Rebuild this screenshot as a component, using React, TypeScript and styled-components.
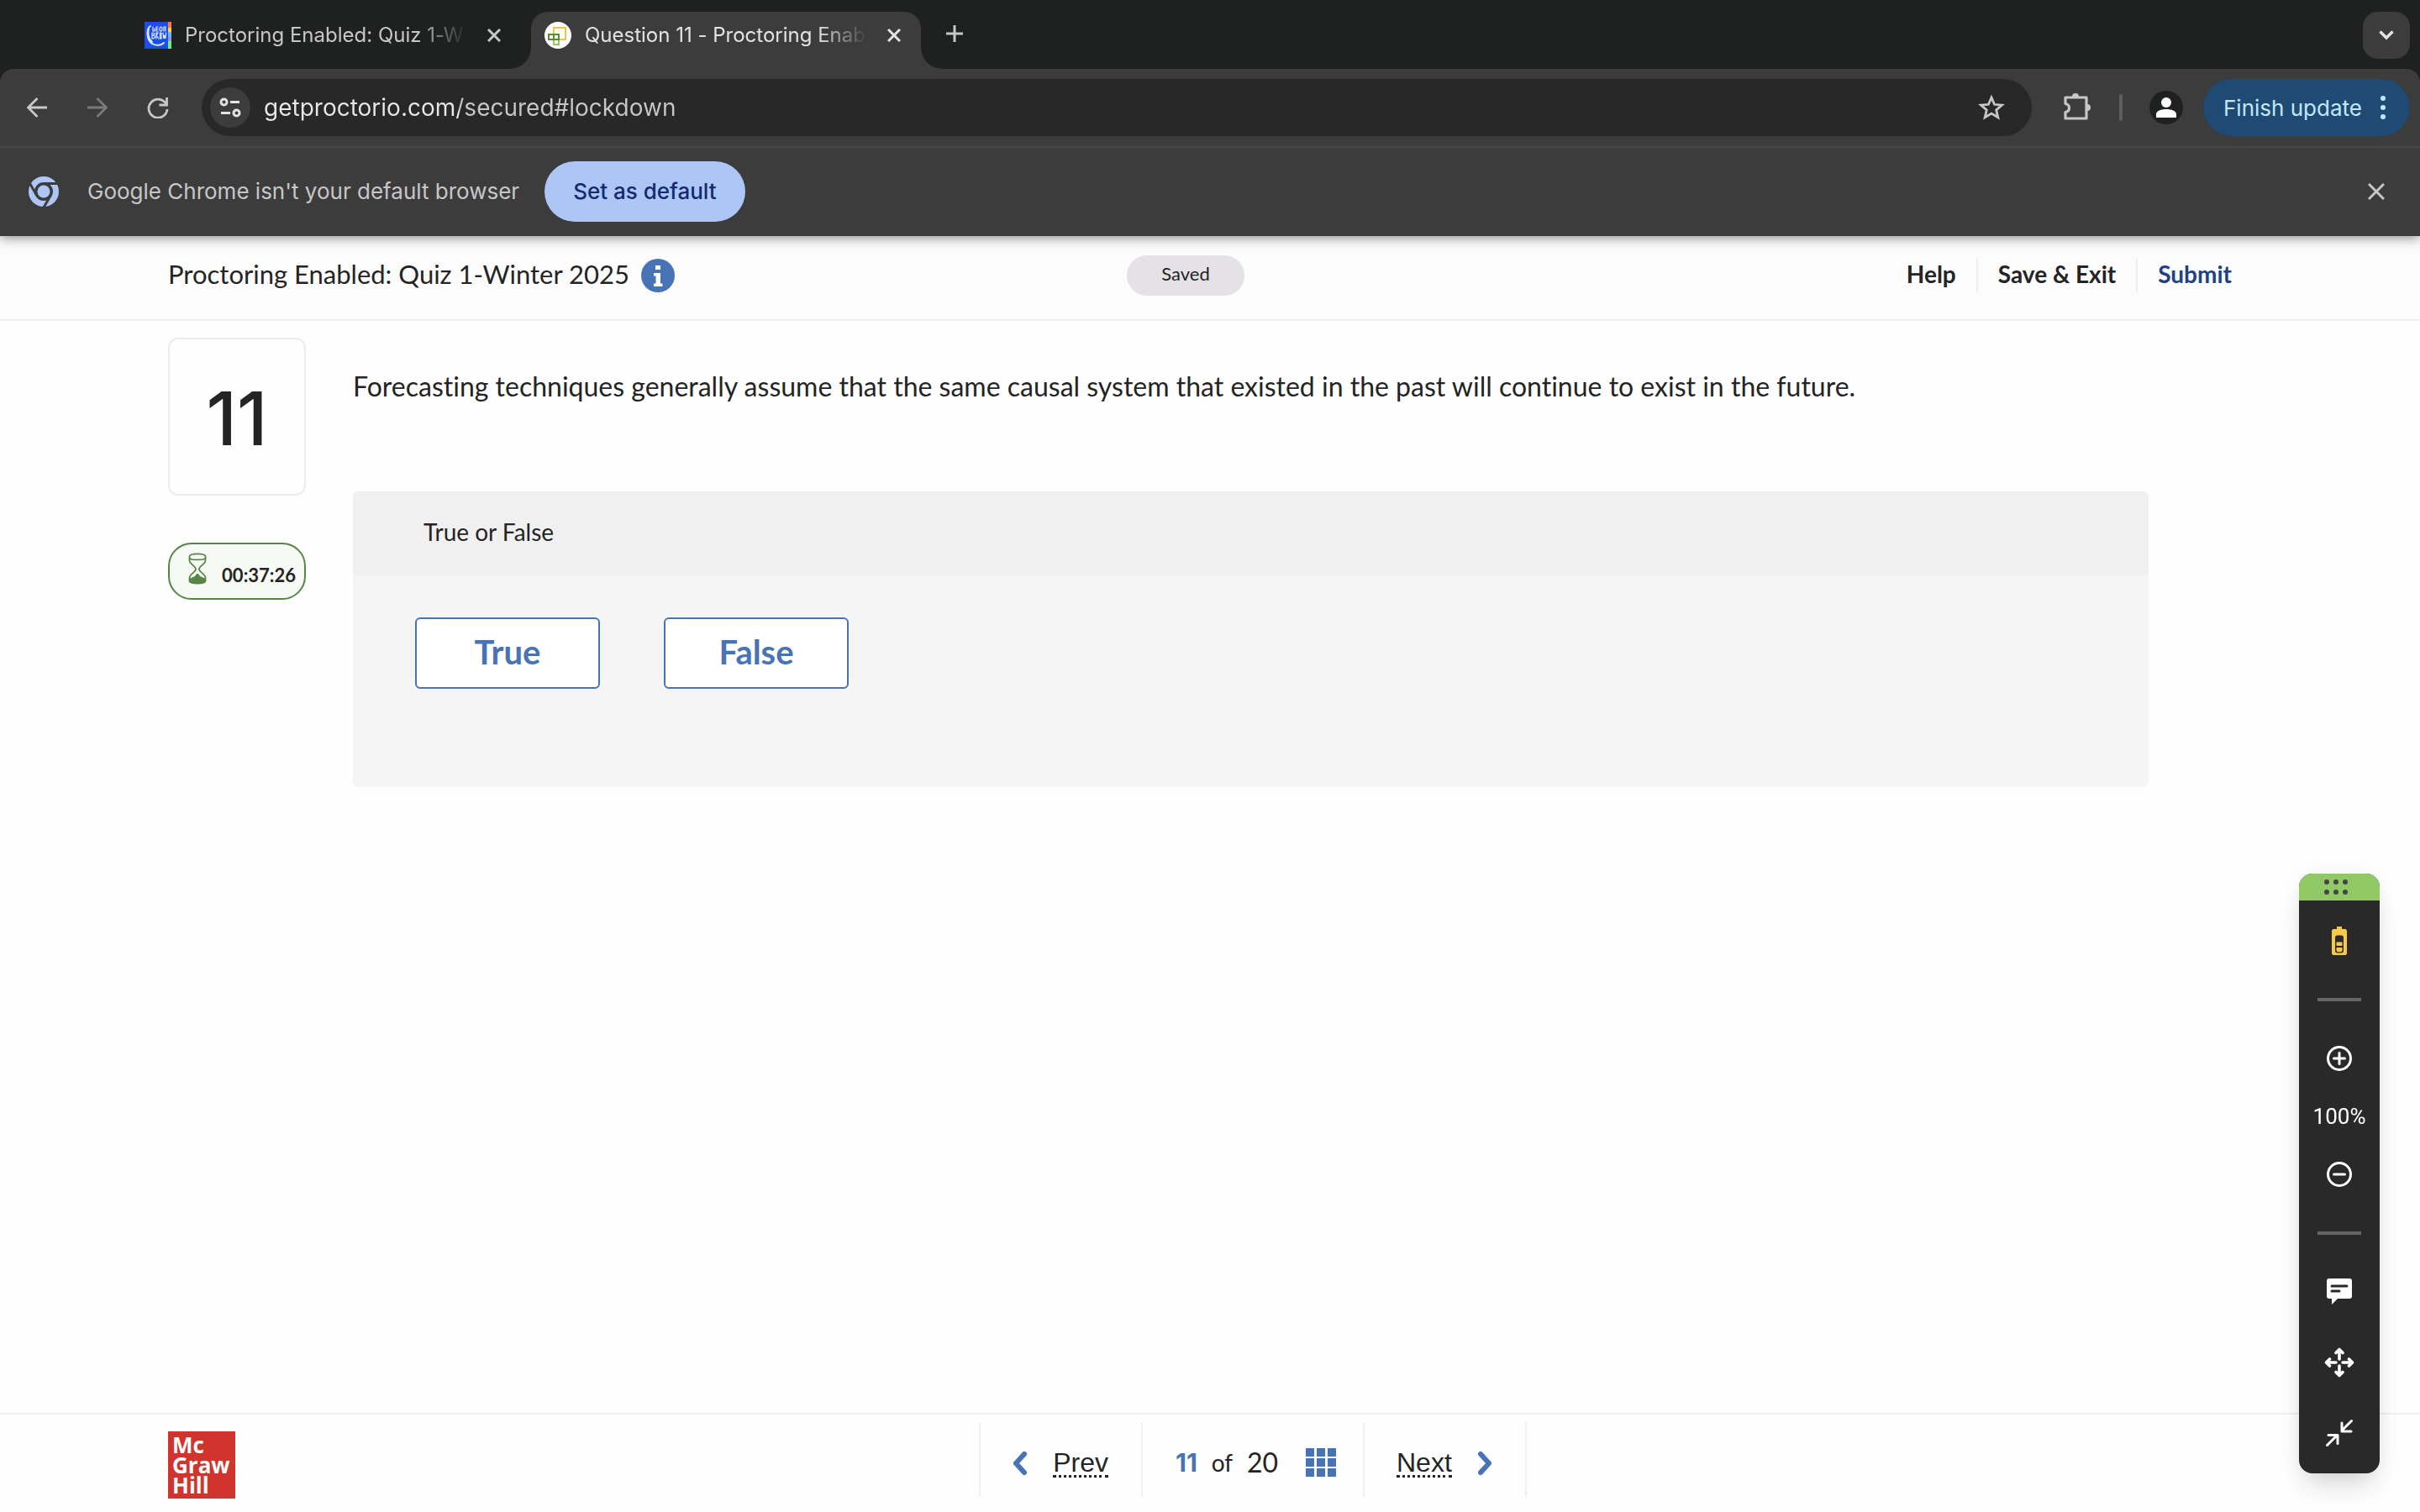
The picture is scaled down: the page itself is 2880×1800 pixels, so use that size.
import React from "react";
import styled, { createGlobalStyle } from "styled-components";

const GlobalStyle = createGlobalStyle`
  *, *::before, *::after { box-sizing: border-box; }
  body {
    margin: 0;
    background: #fefefe;
    color: #242424;
    font-family: Lato, "Open Sans", sans-serif;
    font-variant-ligatures: none;
  }
  button { font: inherit; color: inherit; padding: 0; border: 0; background: none; cursor: pointer; }
  a { color: inherit; text-decoration: none; }
  h1, h2, p { margin: 0; font-weight: 400; }
  svg { display: block; flex: none; }
`;

const Screen = styled.div`
  min-height: 100vh;
  display: flex;
  flex-direction: column;
`;

/* Browser frame */

const Browser = styled.header`
  position: relative;
  z-index: 1;
  background: #1f2120;
  color: #c7c7c7;
  font-family: Inter, "Liberation Sans", sans-serif;
  box-shadow: 0 1px 14px rgba(40, 32, 40, 0.6);
`;

const TabStrip = styled.div`
  display: flex;
  align-items: flex-end;
  height: 82px;
  padding: 0 12px 0 156px;
`;

const Tab = styled.div<{ $active?: boolean }>`
  position: relative;
  display: flex;
  align-items: center;
  width: 464px;
  height: 68px;
  margin-right: 12px;
  padding: 0 12px 12px 16px;
  border-radius: 20px 20px 0 0;
  background: ${(p) => (p.$active ? "#3c3c3c" : "transparent")};
  color: ${(p) => (p.$active ? "#e3e3e3" : "#c7c7c7")};

  &::before,
  &::after {
    content: "";
    display: ${(p) => (p.$active ? "block" : "none")};
    position: absolute;
    bottom: 0;
    width: 24px;
    height: 24px;
  }
  &::before { right: 100%; background: radial-gradient(circle at 0 0, transparent 23px, #3c3c3c 24px); }
  &::after { left: 100%; background: radial-gradient(circle at 100% 0, transparent 23px, #3c3c3c 24px); }
`;

const TabTitle = styled.span`
  flex: 1;
  min-width: 0;
  margin: 0 12px 0 16px;
  overflow: hidden;
  white-space: nowrap;
  font-size: 24px;
  line-height: 32px;
  mask-image: linear-gradient(90deg, #000 calc(100% - 60px), transparent);
`;

const IconButton = styled.button<{ $size?: number }>`
  display: grid;
  place-items: center;
  flex: none;
  width: ${(p) => p.$size ?? 48}px;
  height: ${(p) => p.$size ?? 48}px;
`;

const NewTab = styled(IconButton)`
  margin: 0 auto 22px 8px;
`;

const TabSearch = styled(IconButton)`
  margin-bottom: 12px;
  border-radius: 18px;
  background: #3c3c3c;
  color: #e3e3e3;
`;

const Toolbar = styled.div`
  display: flex;
  align-items: center;
  height: 94px;
  padding: 0 12px 0 20px;
  border-bottom: 2px solid #484848;
  border-radius: 16px 16px 0 0;
  background: #3c3c3c;
`;

const History = styled.nav`
  display: flex;
  gap: 24px;
  margin-right: 28px;
`;

const Omnibox = styled.div`
  display: flex;
  align-items: center;
  flex: 1;
  height: 68px;
  padding: 0 24px 0 10px;
  border-radius: 34px;
  background: #282828;
`;

const SiteInfo = styled(IconButton)`
  border-radius: 50%;
  background: #3c3c3c;
  color: #e3e3e3;
`;

const Address = styled.input`
  flex: 1;
  min-width: 0;
  margin: 0 16px;
  padding: 0;
  border: 0;
  outline: 0;
  font: 400 28px/40px Inter, "Liberation Sans", sans-serif;
  color: transparent;
  background: linear-gradient(90deg, #e8e8e8 232px, #c7c7c7 232px);
  background-clip: text;
`;

const Extensions = styled(IconButton)`
  margin: 0 26px 0 30px;
`;

const ToolbarDivider = styled.span`
  width: 4px;
  height: 32px;
  border-radius: 2px;
  background: #5e5e5e;
`;

const Profile = styled(IconButton)`
  margin: 0 24px 0 32px;
  border-radius: 50%;
  background: #1f2120;
`;

const UpdateButton = styled.button`
  display: flex;
  align-items: center;
  justify-content: space-between;
  width: 246px;
  height: 68px;
  padding: 0 28px 0 24px;
  border-radius: 34px;
  background: #1f4a73;
  color: #c2e7ff;
  font-size: 26px;
  font-weight: 400;
`;

const InfoBar = styled.div`
  display: flex;
  align-items: center;
  height: 105px;
  padding: 0 28px 2px 34px;
  background: #3c3c3c;
  font-size: 26px;
`;

const InfoText = styled.p`
  margin: 0 30px 0 34px;
`;

const DefaultButton = styled.button`
  height: 72px;
  padding: 0 34px;
  margin-right: auto;
  border-radius: 36px;
  background: #aec6f6;
  color: #102c6e;
  font-weight: 500;
`;

/* Quiz page */

const PageHeader = styled.div`
  display: grid;
  grid-template-columns: 1141fr auto 1199fr;
  align-items: center;
  height: 101px;
  padding: 0 200px 6px;
  border-bottom: 2px solid #eeeeee;
  background: #fcfcfc;
`;

const TitleGroup = styled.div`
  display: flex;
  align-items: center;
  gap: 14px;
`;

const PageTitle = styled.h1`
  padding-bottom: 4px;
  font-size: 31px;
  line-height: 36px;
  white-space: nowrap;
`;

const SavedPill = styled.span`
  width: 140px;
  padding-bottom: 4px;
  border-radius: 24px;
  background: #e4e2e5;
  font-size: 22px;
  line-height: 44px;
  text-align: center;
`;

const HeaderNav = styled.nav`
  display: flex;
  justify-content: flex-end;
`;

const HeaderAction = styled.button<{ $primary?: boolean }>`
  padding: 0 24px 4px;
  font-size: 28px;
  font-weight: 700;
  line-height: 36px;
  color: ${(p) => (p.$primary ? "#1f4382" : "#242424")};

  & + & { border-left: 2px solid #eeeeee; }
`;

const Main = styled.main`
  flex: 1;
  display: grid;
  grid-template-columns: 164px 1fr;
  column-gap: 56px;
  align-items: start;
  padding: 20px 323px 0 200px;
`;

const Aside = styled.div`
  display: flex;
  flex-direction: column;
  gap: 56px;
`;

const QuestionNumber = styled.h2`
  display: grid;
  place-items: center;
  height: 188px;
  padding-top: 4px;
  border: 2px solid #ececec;
  border-radius: 12px;
  font-family: Inter, sans-serif;
  font-size: 88px;
  font-weight: 500;
`;

const Timer = styled.div`
  display: flex;
  align-items: center;
  justify-content: space-between;
  height: 68px;
  padding: 0 10px 6px 22px;
  border: 2px solid #578546;
  border-radius: 28px;
  background: #f7f9f5;
  color: #578546;
`;

const TimeLeft = styled.span`
  padding-top: 14px;
  color: #242424;
  font-size: 22px;
  font-weight: 700;
`;

const QuestionText = styled.p`
  padding-top: 38px;
  font-size: 32px;
  line-height: 40px;
`;

const AnswerPanel = styled.section`
  margin-top: 105px;
  border-radius: 6px;
  background: #f5f5f5;
  overflow: hidden;
`;

const AnswerTitle = styled.h2`
  padding: 0 84px 4px;
  background: #f0f0f0;
  font-size: 28px;
  line-height: 96px;
`;

const Answers = styled.div`
  display: flex;
  gap: 76px;
  padding: 50px 74px 117px;
`;

const AnswerButton = styled.button`
  width: 220px;
  height: 85px;
  padding-bottom: 4px;
  border: 2px solid #4874b5;
  border-radius: 6px;
  background: #ffffff;
  color: #4874b5;
  font-size: 40px;
  font-weight: 700;
`;

const Footer = styled.footer`
  display: grid;
  grid-template-columns: 965fr auto 863fr;
  padding: 10px 200px 16px;
  border-top: 2px solid #f0f0f0;
`;

const Logo = styled.div`
  width: 80px;
  height: 80px;
  margin-top: 10px;
  padding: 4px 5px;
  background: #d0342c;
  color: #ffffff;
  font: 700 26px/24px "Open Sans", sans-serif;
  white-space: pre-line;
`;

const Pager = styled.nav`
  display: flex;
  height: 88px;
  border-right: 2px solid #f0f0f0;
`;

const PagerCell = styled.div`
  display: flex;
  align-items: center;
  justify-content: space-between;
  width: 193px;
  padding: 8px 39px 0 38px;
  border-left: 2px solid #f0f0f0;
`;

const Position = styled(PagerCell)`
  width: 264px;
  padding: 6px 32px 0 39px;
`;

const PageLink = styled.a`
  border-bottom: 3px dotted #242424;
  font: 400 32px/30px "Liberation Sans", Arial, sans-serif;
`;

const CurrentPage = styled.strong`
  color: #4874b5;
  font: 700 30px/40px Inter, sans-serif;
`;

const PageCount = styled.span`
  font-size: 32px;
  line-height: 40px;
`;

const PageOf = styled.span`
  font-size: 28px;
  line-height: 40px;
`;

const QuestionGridButton = styled.button`
  margin-left: 16px;
`;

const GridBlue = styled.div`
  display: grid;
  grid-template-columns: repeat(3, 10px);
  gap: 2px 3px;
`;

const GridCell = styled.span`
  height: 10px;
  background: #4874b5;
`;

/* Floating proctor controls */

const Dock = styled.aside`
  position: fixed;
  right: 48px;
  bottom: 46px;
  z-index: 2;
  width: 96px;
  padding-bottom: 6px;
  border-radius: 16px;
  background: #292929;
  color: #ffffff;
  box-shadow: 0 20px 32px -8px rgba(0, 0, 0, 0.16), 0 0 24px rgba(0, 0, 0, 0.05);
`;

const DockHandle = styled.button`
  display: grid;
  place-items: center;
  width: 100%;
  height: 32px;
  margin-bottom: 6px;
  padding: 0 8px 0 0;
  border-radius: 16px 16px 0 0;
  background: #90c965;
`;

const DockButton = styled.button`
  display: grid;
  place-items: center;
  width: 100%;
  height: 84px;
`;

const DockRule = styled.hr`
  width: 52px;
  height: 4px;
  margin: 26px auto;
  border: 0;
  background: #666666;
`;

const ZoomLevel = styled.div`
  font-family: Roboto, sans-serif;
  font-size: 26px;
  line-height: 54px;
  text-align: center;
`;

type StrokeProps = {
  w: number;
  h?: number;
  sw: number;
  d: string;
  color?: string;
  cap?: "round" | "butt";
};

const Stroke = ({ w, h = w, sw, d, color = "currentColor", cap = "round" }: StrokeProps) => (
  <svg width={w} height={h} viewBox={`0 0 ${w} ${h}`} fill="none" stroke={color} strokeWidth={sw} strokeLinecap={cap} strokeLinejoin={cap === "round" ? "round" : "miter"} aria-hidden="true">
    <path d={d} />
  </svg>
);

const CloseIcon = ({ size = 16 }: { size?: number }) => (
  <Stroke w={size} sw={3} cap="butt" d={`M1 1L${size - 1} ${size - 1}M${size - 1} 1L1 ${size - 1}`} />
);

const CollegeFavicon = () => (
  <svg width="32" height="32" viewBox="0 0 32 32" aria-hidden="true">
    <rect width="32" height="32" fill="#1d4fe8" />
    <g fill="none" stroke="#dbe6ff" strokeLinecap="round">
      <path strokeWidth="2" d="M7 5C2 8 2 21 9 26c5 3 11 2 14-1M5 8c-2 6 0 13 4 16" />
      <path strokeWidth="1.2" d="M10 6v5h2v-3M14 6h2M14 8.500h2M14 11h2M14 6v5M19.500 6c-2 1-2 5 0 5s2-5 0-5M23 11V6h2v5" />
      <path strokeWidth="1.2" d="M9 13v7M9 13c4 0 4 3 0 3 5 0 4 4 0 4M14 20v-7h2l-2 3 3 4M18.500 13v7h1.500v-7zM22 13l.8 7 1-4 1 4 .8-7" />
    </g>
    <rect x="28" width="4" height="8" fill="#ff7a3c" />
    <rect x="28" y="7" width="4" height="5" fill="#ffd34d" />
    <rect x="28" y="12" width="4" height="6" fill="#6fb7ff" />
    <rect x="28" y="18" width="4" height="6" fill="#9d8cff" />
    <rect x="28" y="23" width="4" height="9" fill="#6df26a" />
  </svg>
);

const ProctorFavicon = () => (
  <svg width="32" height="32" viewBox="0 0 32 32" fill="none" strokeWidth="2" aria-hidden="true">
    <circle cx="16" cy="16" r="16" fill="#fff" />
    <path stroke="#f5c342" d="M11 14V7h14v14h-7" />
    <path stroke="#8cc665" d="M11 21v6h6v-6" />
    <path stroke="#5b8c35" d="M5 15h12v6H5zM11 15v6" />
  </svg>
);

const ChromeIcon = () => (
  <svg width="36" height="36" viewBox="0 0 36 36" aria-hidden="true">
    <circle cx="18" cy="18" r="18" fill="#aec6f6" />
    <circle cx="18" cy="18" r="11" fill="#3c3c3c" />
    {[0, 120, 240].map((angle) => (
      <path key={angle} d="M18 8.500h19" stroke="#3c3c3c" strokeWidth="3" transform={`rotate(${angle} 18 18)`} />
    ))}
    <circle cx="18" cy="18" r="7.500" fill="#aec6f6" />
  </svg>
);

const PuzzleIcon = () => (
  <svg width="34" height="34" viewBox="0 2 34 34" aria-hidden="true">
    <path fill="none" stroke="currentColor" strokeWidth="3.2" strokeLinejoin="round" d="M3 7h25v25H3v-7.500c6-1 6-9 0-10z" />
    <path fill="currentColor" d="M11 6a4 4 0 0 1 8 0zM29 15a4 4 0 0 1 0 8z" />
  </svg>
);

const InfoIcon = () => (
  <svg width="40" height="40" viewBox="0 0 40 40" aria-hidden="true">
    <circle cx="20" cy="20" r="20" fill="#4874b5" />
    <path fill="#fff" d="M17 8h6v5h-6zM15 17h8v12.500h2.500V33h-10.500v-3.500h2.500v-9H15z" />
  </svg>
);

const HourglassIcon = () => (
  <svg width="22" height="38" viewBox="0 0 22 38" aria-hidden="true">
    <g fill="none" stroke="currentColor" strokeWidth="1.8">
      <path d="M1.500 4.500C1.500 0.300 20.500 0.300 20.500 4.500V9c0 5-7.500 6.500-7.500 10.500S20.500 25 20.500 30v3.500c0 4.200-19 4.200-19 0V30c0-5 7.500-6.500 7.500-10.500S1.500 14 1.500 9z" />
      <path d="M1.500 6.500c2 2.500 17 2.500 19 0" />
    </g>
    <path fill="currentColor" d="M1.500 31c3-2 7-2 8.500-6h2c1.500 4 5.500 4 8.500 6v3c0 4-19 4-19 0z" />
  </svg>
);

const BatteryIcon = () => (
  <svg width="18" height="34" viewBox="0 0 18 34" aria-hidden="true">
    <path fill="#f7c948" d="M6 0h6v3h4.500L18 4.500V32.500L16.500 34h-15L0 32.500V4.500L1.500 3H6z" />
    <rect x="4" y="10.500" width="10" height="21" rx="3" fill="#292929" />
    <path fill="#f7c948" d="M5.500 18.500h7v4.500h-7zM5.500 25h7v4l-1.500 1.300h-4L5.500 29z" />
  </svg>
);

const CommentIcon = () => (
  <svg width="30" height="32" viewBox="0 0 30 32" aria-hidden="true">
    <path fill="currentColor" d="M3 0h24a3 3 0 0 1 3 3v18a3 3 0 0 1-3 3H13l-7 7v-7H3a3 3 0 0 1-3-3V3a3 3 0 0 1 3-3z" />
    <path stroke="#292929" strokeWidth="3" strokeLinecap="round" d="M6 9h18M6 15h9" />
  </svg>
);

const circle = "M15 1.500a13.500 13.500 0 1 0 0 27a13.500 13.500 0 1 0 0-27z";

export default function App() {
  return (
    <Screen>
      <GlobalStyle />
      <Browser>
        <TabStrip>
          <Tab>
            <CollegeFavicon />
            <TabTitle>Proctoring Enabled: Quiz 1-W</TabTitle>
            <IconButton $size={40} aria-label="Close tab"><CloseIcon /></IconButton>
          </Tab>
          <Tab $active>
            <ProctorFavicon />
            <TabTitle>Question 11 - Proctoring Enab</TabTitle>
            <IconButton $size={40} aria-label="Close tab"><CloseIcon /></IconButton>
          </Tab>
          <NewTab $size={40} aria-label="New tab"><Stroke w={20} sw={3} cap="butt" d="M10 0v20M0 10h20" /></NewTab>
          <TabSearch $size={56} aria-label="Search tabs"><Stroke w={18} h={12} sw={3.4} cap="butt" d="M1.500 1.500L9 9l7.500-7.500" /></TabSearch>
        </TabStrip>
        <Toolbar>
          <History aria-label="History">
            <IconButton aria-label="Back"><Stroke w={26} sw={2.8} cap="butt" d="M25 13H3M13.500 2L2.500 13l11 11" /></IconButton>
            <IconButton aria-label="Forward"><Stroke w={26} sw={2.8} cap="butt" color="#7a7a7a" d="M1 13h22M12.500 2l11 11-11 11" /></IconButton>
            <IconButton aria-label="Reload"><Stroke w={26} sw={2.8} cap="butt" d="M23 9.500A11 11 0 1 0 24 15M23.500 1v9H14.500" /></IconButton>
          </History>
          <Omnibox>
            <SiteInfo aria-label="View site information"><Stroke w={26} sw={3} cap="butt" d="M9 6.500a3.500 3.500 0 1 0-7 0a3.500 3.500 0 1 0 7 0M13 6.500h11M24 19.500a3.500 3.500 0 1 0-7 0a3.500 3.500 0 1 0 7 0M2 19.500h11" /></SiteInfo>
            <Address aria-label="Address" defaultValue="getproctorio.com/secured#lockdown" />
            <IconButton aria-label="Bookmark this tab"><Stroke w={32} sw={2.8} cap="butt" d="M16 4l3.500 8.300 9 .800-6.800 5.900 2.100 8.800L16 23.100l-7.800 4.700 2.100-8.800L3.500 13.100l9-.800z" /></IconButton>
          </Omnibox>
          <Extensions aria-label="Extensions"><PuzzleIcon /></Extensions>
          <ToolbarDivider />
          <Profile $size={40} aria-label="Profile">
            <svg width="24" height="24" viewBox="0 0 24 24" fill="#fff" aria-hidden="true"><circle cx="12" cy="6" r="6" /><path d="M0 24v-4c0-8 24-8 24 0v4z" /></svg>
          </Profile>
          <UpdateButton>
            Finish update
            <svg width="8" height="28" viewBox="0 0 8 28" fill="currentColor" aria-hidden="true"><circle cx="4" cy="3" r="3" /><circle cx="4" cy="14" r="3" /><circle cx="4" cy="25" r="3" /></svg>
          </UpdateButton>
        </Toolbar>
        <InfoBar>
          <ChromeIcon />
          <InfoText>Google Chrome isn't your default browser</InfoText>
          <DefaultButton>Set as default</DefaultButton>
          <IconButton aria-label="Dismiss"><CloseIcon size={20} /></IconButton>
        </InfoBar>
      </Browser>

      <PageHeader>
        <TitleGroup>
          <PageTitle>Proctoring Enabled: Quiz 1-Winter 2025</PageTitle>
          <button aria-label="Assignment information"><InfoIcon /></button>
        </TitleGroup>
        <SavedPill>Saved</SavedPill>
        <HeaderNav>
          <HeaderAction>Help</HeaderAction>
          <HeaderAction>Save &amp; Exit</HeaderAction>
          <HeaderAction $primary>Submit</HeaderAction>
        </HeaderNav>
      </PageHeader>

      <Main>
        <Aside>
          <QuestionNumber>11</QuestionNumber>
          <Timer>
            <HourglassIcon />
            <TimeLeft>00:37:26</TimeLeft>
          </Timer>
        </Aside>
        <div>
          <QuestionText>Forecasting techniques generally assume that the same causal system that existed in the past will continue to exist in the future.</QuestionText>
          <AnswerPanel>
            <AnswerTitle>True or False</AnswerTitle>
            <Answers>
              <AnswerButton>True</AnswerButton>
              <AnswerButton>False</AnswerButton>
            </Answers>
          </AnswerPanel>
        </div>
      </Main>

      <Footer>
        <Logo>{"Mc\nGraw\nHill"}</Logo>
        <Pager aria-label="Questions">
          <PagerCell>
            <Stroke w={18} h={30} sw={6} color="#4874b5" d="M14 4L4 15l10 11" />
            <PageLink href="#prev">Prev</PageLink>
          </PagerCell>
          <Position>
            <CurrentPage>11</CurrentPage>
            <PageOf>of</PageOf>
            <PageCount>20</PageCount>
            <QuestionGridButton aria-label="Question list">
              <GridBlue>{Array.from({ length: 9 }, (_, i) => <GridCell key={i} />)}</GridBlue>
            </QuestionGridButton>
          </Position>
          <PagerCell>
            <PageLink href="#next">Next</PageLink>
            <Stroke w={18} h={30} sw={6} color="#4874b5" d="M4 4l10 11L4 26" />
          </PagerCell>
        </Pager>
      </Footer>

      <Dock>
        <DockHandle aria-label="Move controls">
          <svg width="28" height="18" viewBox="0 0 28 18" fill="#444" aria-hidden="true">
            {[3, 14, 25].map((x) => <React.Fragment key={x}><circle cx={x} cy="3" r="3" /><circle cx={x} cy="15" r="3" /></React.Fragment>)}
          </svg>
        </DockHandle>
        <DockButton aria-label="Battery"><BatteryIcon /></DockButton>
        <DockRule />
        <DockButton aria-label="Zoom in"><Stroke w={30} sw={3} d={circle + "M15 8.500v13M8.500 15h13"} /></DockButton>
        <ZoomLevel>100%</ZoomLevel>
        <DockButton aria-label="Zoom out"><Stroke w={30} sw={3} d={circle + "M8.500 15h13"} /></DockButton>
        <DockRule />
        <DockButton aria-label="Chat"><CommentIcon /></DockButton>
        <DockButton aria-label="Move"><Stroke w={36} sw={3.6} d="M18 14V3M14 6.500L18 2.500l4 4M18 22v11M14 29.500l4 4 4-4M14 18H3M6.500 14L2.500 18l4 4M22 18h11M29.500 14l4 4-4 4" /></DockButton>
        <DockButton aria-label="Collapse"><Stroke w={34} sw={3} d="M31.500 2.500L20 14M20 5v10h11M2.500 31.500L14 20M4 19.500h11v10" /></DockButton>
      </Dock>
    </Screen>
  );
}
